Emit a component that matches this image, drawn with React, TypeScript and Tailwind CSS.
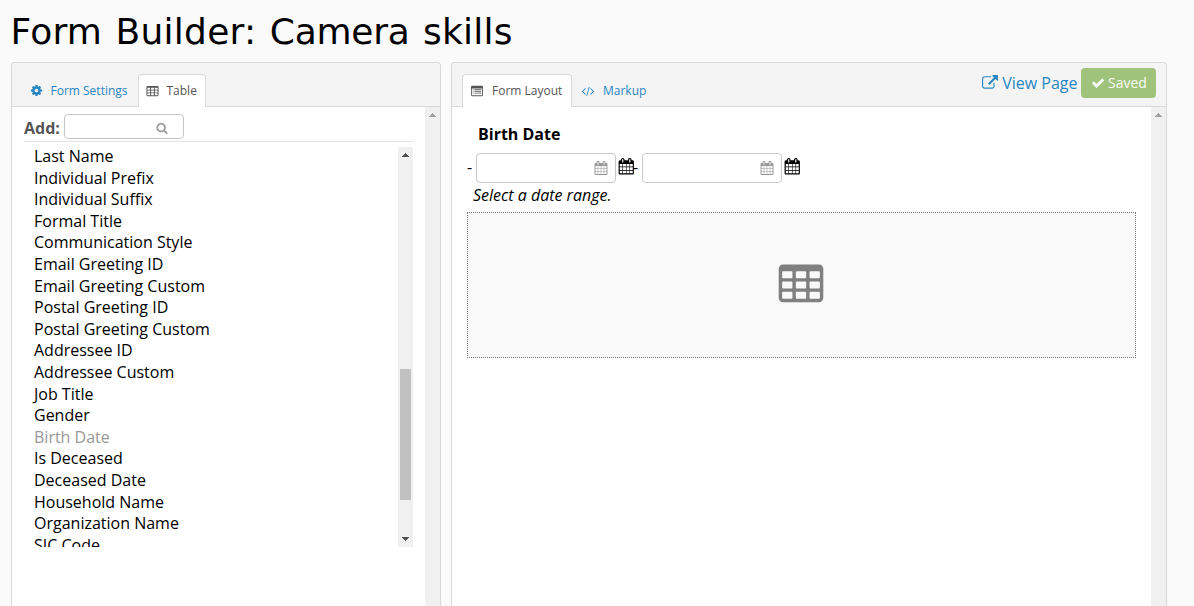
import React from "react";

const icons = {
  table:
    "M576 1376v-192q0-14-9-23t-23-9h-320q-14 0-23 9t-9 23v192q0 14 9 23t23 9h320q14 0 23-9t9-23zm0-384v-192q0-14-9-23t-23-9h-320q-14 0-23 9t-9 23v192q0 14 9 23t23 9h320q14 0 23-9t9-23zm512 384v-192q0-14-9-23t-23-9h-320q-14 0-23 9t-9 23v192q0 14 9 23t23 9h320q14 0 23-9t9-23zm-512-768v-192q0-14-9-23t-23-9h-320q-14 0-23 9t-9 23v192q0 14 9 23t23 9h320q14 0 23-9t9-23zm512 384v-192q0-14-9-23t-23-9h-320q-14 0-23 9t-9 23v192q0 14 9 23t23 9h320q14 0 23-9t9-23zm512 384v-192q0-14-9-23t-23-9h-320q-14 0-23 9t-9 23v192q0 14 9 23t23 9h320q14 0 23-9t9-23zm-512-768v-192q0-14-9-23t-23-9h-320q-14 0-23 9t-9 23v192q0 14 9 23t23 9h320q14 0 23-9t9-23zm512 384v-192q0-14-9-23t-23-9h-320q-14 0-23 9t-9 23v192q0 14 9 23t23 9h320q14 0 23-9t9-23zm0-384v-192q0-14-9-23t-23-9h-320q-14 0-23 9t-9 23v192q0 14 9 23t23 9h320q14 0 23-9t9-23zm128-320v1088q0 66-47 113t-113 47h-1344q-66 0-113-47t-47-113v-1088q0-66 47-113t113-47h1344q66 0 113 47t47 113z",
  calendar:
    "M192 1664h288v-288h-288v288zm352 0h320v-288h-320v288zm-352-352h288v-320h-288v320zm352 0h320v-320h-320v320zm-352-384h288v-288h-288v288zm736 736h320v-288h-320v288zm-384-736h320v-288h-320v288zm768 736h288v-288h-288v288zm-384-352h320v-320h-320v320zm-352-864v-288q0-13-9.5-22.5t-22.5-9.5h-64q-13 0-22.5 9.5t-9.5 22.5v288q0 13 9.5 22.5t22.5 9.5h64q13 0 22.5-9.5t9.5-22.5zm736 864h288v-320h-288v320zm-384-384h320v-288h-320v288zm384 0h288v-288h-288v288zm32-480v-288q0-13-9.5-22.5t-22.5-9.5h-64q-13 0-22.5 9.5t-9.5 22.5v288q0 13 9.5 22.5t22.5 9.5h64q13 0 22.5-9.5t9.5-22.5zm384-64v1280q0 52-38 90t-90 38h-1408q-52 0-90-38t-38-90v-1280q0-52 38-90t90-38h128v-96q0-66 47-113t113-47h64q66 0 113 47t47 113v96h384v-96q0-66 47-113t113-47h64q66 0 113 47t47 113v96h128q52 0 90 38t38 90z",
  cog: "M1152 896q0-106-75-181t-181-75-181 75-75 181 75 181 181 75 181-75 75-181zm512-109v222q0 12-8 23t-20 13l-185 28q-19 54-39 91 35 50 107 138 10 12 10 25t-9 23q-27 37-99 108t-94 71q-12 0-26-9l-138-108q-44 23-91 38-16 136-29 186-7 28-36 28h-222q-14 0-24.5-8.5t-11.5-21.5l-28-184q-49-16-90-37l-141 107q-10 9-25 9-14 0-25-11-126-114-165-168-7-10-7-23 0-12 8-23 15-21 51-66.5t54-70.5q-27-50-41-99l-183-27q-13-2-21-12.5t-8-23.5v-222q0-12 8-23t19-13l186-28q14-46 39-92-40-57-107-138-10-12-10-24 0-10 9-23 26-36 98.5-107.5t94.5-71.5q13 0 26 10l138 107q44-23 91-38 16-136 29-186 7-28 36-28h222q14 0 24.5 8.5t11.5 21.5l28 184q49 16 90 37l142-107q9-9 24-9 13 0 25 10 129 119 165 170 7 8 7 22 0 12-8 23-15 21-51 66.5t-54 70.5q26 50 41 98l183 28q13 2 21 12.5t8 23.5z",
  search:
    "M1216 832q0-185-131.5-316.5t-316.5-131.5-316.5 131.5-131.5 316.5 131.5 316.5 316.5 131.5 316.5-131.5 131.5-316.5zm512 832q0 52-38 90t-90 38q-54 0-90-38l-343-342q-179 124-399 124-143 0-273.5-55.5t-225-150-150-225-55.5-273.5 55.5-273.5 150-225 225-150 273.5-55.5 273.5 55.5 225 150 150 225 55.5 273.5q0 220-124 399l343 343q37 37 37 90z",
  external:
    "M1408 928v320q0 119-84.5 203.5t-203.5 84.5h-832q-119 0-203.5-84.5t-84.5-203.5v-832q0-119 84.5-203.5t203.5-84.5h704q14 0 23 9t9 23v64q0 14-9 23t-23 9h-704q-66 0-113 47t-47 113v832q0 66 47 113t113 47h832q66 0 113-47t47-113v-320q0-14 9-23t23-9h64q14 0 23 9t9 23zm384-864v512q0 26-19 45t-45 19-45-19l-176-176-652 652q-10 10-23 10t-23-10l-114-114q-10-10-10-23t10-23l652-652-176-176q-19-19-19-45t19-45 45-19h512q26 0 45 19t19 45z",
  check:
    "M1671 566q0 40-28 68l-724 724-136 136q-28 28-68 28t-68-28l-136-136-362-362q-28-28-28-68t28-68l136-136q28-28 68-28t68 28l294 295 656-657q28-28 68-28t68 28l136 136q28 28 28 68z",
  code: "M553 1399l-50 50q-10 10-23 10t-23-10l-466-466q-10-10-10-23t10-23l466-466q10-10 23-10t23 10l50 50q10 10 10 23t-10 23l-393 393 393 393q10 10 10 23t-10 23zm591-1067l-373 1291q-4 13-15.5 19.5t-23.5 2.5l-62-17q-13-4-19.5-15.5t-2.5-24.5l373-1291q4-13 15.5-19.5t23.5-2.5l62 17q13 4 19.5 15.5t2.5 24.5zm657 651l-466 466q-10 10-23 10t-23-10l-50-50q-10-10-10-23t10-23l393-393-393-393q-10-10-10-23t10-23l50-50q10-10 23-10t23 10l466 466q10 10 10 23t-10 23z",
  list: "M0 288a160 160 0 0 1 160-160h1472a160 160 0 0 1 160 160v1216a160 160 0 0 1-160 160h-1472a160 160 0 0 1-160-160zM128 512v992q0 32 32 32h1472q32 0 32-32v-992zM256 640h128v128h-128zM512 640h1024v128h-1024zM256 896h128v128h-128zM512 896h1024v128h-1024zM256 1152h128v128h-128zM512 1152h1024v128h-1024z",
};

function Icon({ name, className }: { name: keyof typeof icons; className: string }) {
  return (
    <svg viewBox="0 0 1792 1792" fill="currentColor" className={`shrink-0 overflow-visible ${className}`}>
      <path fillRule={name === "list" ? "evenodd" : "nonzero"} d={icons[name]} />
    </svg>
  );
}

function Arrow({ down, className }: { down?: boolean; className: string }) {
  return (
    <svg viewBox="0 0 7 4" fill="currentColor" shapeRendering="crispEdges" className={`h-1 w-[7px] ${className}`}>
      <path d={down ? "M0 0h7v1h-1v1h-1v1h-1v1h-1v-1h-1v-1h-1v-1h-1z" : "M3 0h1v1h1v1h1v1h1v1h-7v-1h1v-1h1v-1h1z"} />
    </svg>
  );
}

const fields = [
  "Last Name",
  "Individual Prefix",
  "Individual Suffix",
  "Formal Title",
  "Communication Style",
  "Email Greeting ID",
  "Email Greeting Custom",
  "Postal Greeting ID",
  "Postal Greeting Custom",
  "Addressee ID",
  "Addressee Custom",
  "Job Title",
  "Gender",
  "Birth Date",
  "Is Deceased",
  "Deceased Date",
  "Household Name",
  "Organization Name",
  "SIC Code",
];

function PanelScroll() {
  return (
    <div className="flex w-[15px] shrink-0 flex-col items-center bg-[#f0f0f0] pt-1.5 text-[#a3a3a3]">
      <Arrow className="" />
    </div>
  );
}

function DateInput() {
  return (
    <div className="flex h-[30px] w-[140px] items-center justify-end rounded border border-[#c6c6c6] bg-white pr-[7.5px] text-[#999]">
      <Icon name="calendar" className="h-3.5 w-3.5" />
    </div>
  );
}

export default function App() {
  return (
    <div className="flex h-[606px] w-[1194px] flex-col overflow-hidden bg-[#fafafa] font-['Open_Sans',sans-serif] text-base text-black">
      <h1 className="h-[62px] shrink-0 pt-2.5 pl-[10.5px] font-['Verdana','DejaVu_Sans',sans-serif] text-[36px] leading-[44px] tracking-[0.25px] whitespace-nowrap [word-spacing:1.7px]">
        Form Builder: <span className="tracking-[-0.25px]">Camera</span> skills
      </h1>
      <div className="flex min-h-0 flex-1 gap-2.5 pl-[11px]">
        <section className="flex w-[430px] flex-col rounded-t border border-b-0 border-[#d9d9d9] bg-white">
          <nav className="flex h-11 shrink-0 items-end rounded-t border-b border-[#d9d9d9] bg-[#f4f4f4] pl-[9px] text-xs">
            <a className="-mb-px flex h-[33px] w-[117px] items-center pl-[9px] text-[#2786c2]">
              <Icon name="cog" className="mr-[7.5px] h-[13px] w-[13px]" />
              Form Settings
            </a>
            <a className="-mb-px flex h-[33px] w-[68px] items-center rounded-t border border-b-0 border-[#d9d9d9] bg-white pl-[7px] text-[#555]">
              <Icon name="table" className="mr-[7.5px] h-[13px] w-[13px]" />
              Table
            </a>
          </nav>
          <div className="flex min-h-0 flex-1 justify-between">
            <div className="ml-3 w-[389px]">
              <div className="flex h-[35px] items-start border-b border-[#e2e2e2] pt-[7px]">
                <span className="w-10 pt-px leading-[27px] font-bold text-[#555]">Add:</span>
                <div className="flex h-[25px] w-[120px] items-center justify-end rounded border border-[#c6c6c6] pt-[2px] pr-[15px] text-[#999]">
                  <Icon name="search" className="h-3 w-3" />
                </div>
              </div>
              <div className="mt-[5px] flex h-[400px] justify-between overflow-hidden">
                <ul className="-mt-px pl-2.5">
                  {fields.map((field) => (
                    <li
                      key={field}
                      className={
                        field === "Birth Date"
                          ? "h-[21.6px] leading-[21.6px] text-[#999]"
                          : "h-[21.6px] leading-[21.6px]"
                      }
                    >
                      {field}
                    </li>
                  ))}
                </ul>
                <div className="flex w-[15px] flex-col items-center bg-[#f0f0f0] text-[#505050]">
                  <Arrow className="mt-1.5" />
                  <div className="mt-[212px] h-[131px] w-[11px] bg-[#c1c1c1]" />
                  <Arrow down className="mt-[37px]" />
                </div>
              </div>
            </div>
            <PanelScroll />
          </div>
        </section>
        <section className="flex w-[716px] flex-col rounded-t border border-b-0 border-[#d9d9d9] bg-white">
          <header className="flex h-11 shrink-0 items-end justify-between rounded-t border-b border-[#d9d9d9] bg-[#f4f4f4] pr-2.5 pl-2.5 text-xs">
            <nav className="-mb-px flex">
              <a className="flex h-[33px] w-[110px] items-center rounded-t border border-b-0 border-[#d9d9d9] bg-white pl-2 text-[#555]">
                <Icon name="list" className="mr-[9px] h-3 w-3" />
                Form Layout
              </a>
              <a className="flex h-[33px] items-center pl-2.5 text-[#2786c2]">
                <Icon name="code" className="mr-[9px] h-3 w-3" />
                Markup
              </a>
            </nav>
            <div className="mb-2 flex h-[30px] items-center">
              <a className="flex items-center text-base text-[#2786c2]">
                <Icon name="external" className="mr-1 h-4 w-4" />
                View Page
              </a>
              <button className="ml-[3.5px] flex h-[30px] w-[75px] items-center rounded bg-[#9fc37b] pl-[9.5px] text-sm text-[#f8fbf5]">
                <Icon name="check" className="mr-[3.5px] h-3.5 w-3.5" />
                Saved
              </button>
            </div>
          </header>
          <div className="flex min-h-0 flex-1 justify-between">
            <div className="w-[684px] pl-[15px]">
              <h2 className="mt-4 pl-[11px] leading-[22px] font-bold">Birth Date</h2>
              <div className="mt-2 flex h-[30px] items-center">
                <span className="-mt-[2px] w-[9px] leading-[22px]">-</span>
                <DateInput />
                <Icon name="calendar" className="-mt-1 ml-[1.5px] h-[16.5px] w-[16.5px]" />
                <span className="-mt-[2px] -ml-px w-[9px] leading-[22px]">-</span>
                <DateInput />
                <Icon name="calendar" className="-mt-1 ml-[1.5px] h-[16.5px] w-[16.5px]" />
              </div>
              <p className="mt-px pl-[6px] leading-[22px] italic">Select a date range.</p>
              <div className="mt-[6px] flex h-[146px] w-[669px] items-center justify-center border border-dotted border-[#777] bg-[#f9f9f9] pr-px text-[#808080]">
                <Icon name="table" className="h-12 w-12" />
              </div>
            </div>
            <PanelScroll />
          </div>
        </section>
      </div>
    </div>
  );
}
